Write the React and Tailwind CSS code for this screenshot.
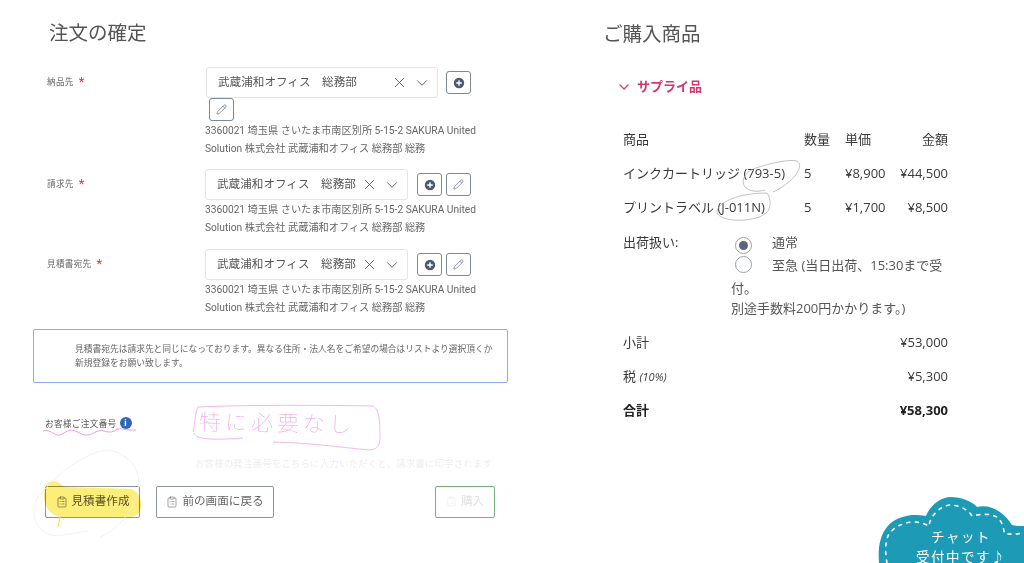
import { X, ChevronDown, Pencil, ClipboardList } from 'lucide-react'

const ADDRESS_1 = '3360021 埼玉県 さいたま市南区別所 5-15-2 SAKURA United'
const ADDRESS_2 = 'Solution 株式会社 武蔵浦和オフィス 総務部 総務'
const LEFT_FONT = 'font-["Roboto","Noto_Sans_CJK_JP",sans-serif]'
const RIGHT_FONT = 'font-["Open_Sans","Noto_Sans_CJK_JP",sans-serif]'

function CirclePlus() {
  return (
    <svg width="12" height="12" viewBox="0 0 12 12">
      <circle cx="6" cy="6" r="5.2" fill="#4b5a72" />
      <path d="M6 3.2v5.6M3.2 6h5.6" stroke="#fff" strokeWidth="1.4" />
    </svg>
  )
}

function IconButton({ children }) {
  return (
    <button className="w-[25px] h-[23px] flex items-center justify-center bg-white border border-[#7d8796] rounded-[3px] text-[#59647a]">
      {children}
    </button>
  )
}

function AddressRow({ label, selectWidth, rowClass, wrapped }) {
  return (
    <div className={`flex ${rowClass}`}>
      <div className="w-[158px] flex items-start pt-[8px] text-[8.6px] leading-[14px] tracking-[0.3px] text-[#666]">
        <span>{label}</span>
        <span className="text-[#e5312f] text-[13px] leading-[13px] ml-[5px]">*</span>
      </div>
      <div className="w-[282px]">
        <div className={`flex flex-wrap w-[272px] ${wrapped ? 'gap-x-[8px] pl-[1px]' : 'gap-x-[9px]'}`}>
          <div className={`${selectWidth} h-[31px] flex items-center pl-[11px] pr-[6px] bg-white border border-[#e2e4e8] rounded-[3px] text-[11.6px] text-[#555]`}>
            <span className="flex-1 whitespace-pre">武蔵浦和オフィス　総務部</span>
            <X size={17} strokeWidth={1.2} className="text-[#555] mr-[5px] shrink-0" />
            <ChevronDown size={18} strokeWidth={1.2} className="text-[#555] shrink-0" />
          </div>
          <div className={`flex items-center ${wrapped ? '' : 'gap-[4px]'}`}>
            <IconButton><CirclePlus /></IconButton>
            {!wrapped && <IconButton><Pencil size={11} strokeWidth={1.4} /></IconButton>}
          </div>
          {wrapped && (
            <div className="w-full pl-[3px]">
              <IconButton><Pencil size={11} strokeWidth={1.4} /></IconButton>
            </div>
          )}
        </div>
        <p className="mt-[1px] text-[10.2px] leading-[17.6px] text-[#666] whitespace-nowrap">
          {ADDRESS_1}<br />{ADDRESS_2}
        </p>
      </div>
    </div>
  )
}

function ActionButton({ className, children }) {
  return (
    <button className={`h-[32px] flex items-center justify-center gap-[4px] border rounded-[2px] text-[11.6px] ${className}`}>
      {children}
    </button>
  )
}

function ItemRow({ name, qty, price, total }) {
  return (
    <div className="grid grid-cols-[181px_41px_1fr_auto] h-[34px] items-center text-[13px] text-[#3a3a3a]">
      <span>{name}</span>
      <span>{qty}</span>
      <span>{price}</span>
      <span className="text-right">{total}</span>
    </div>
  )
}

function Radio({ checked }) {
  return (
    <span className="inline-flex align-[-3px] w-[17px] h-[17px] ml-[4px] mr-[20px] items-center justify-center rounded-full border border-[#9aa0aa] bg-white">
      {checked && <span className="w-[9px] h-[9px] rounded-full bg-[#5a6580]" />}
    </span>
  )
}

function SummaryRow({ label, value, bold }) {
  return (
    <div className={`flex justify-between items-center h-[34px] text-[13px] ${bold ? 'font-bold text-[#222]' : 'text-[#3a3a3a]'}`}>
      {label}
      <span>{value}</span>
    </div>
  )
}

// 手書きの書き込みとチャットバナーはページの上に重ねる
function Annotations() {
  return (
    <svg className="absolute inset-0 pointer-events-none" width="1024" height="563" viewBox="0 0 1024 563" fill="none">
      <path
        d="M44 497C44 487 47 481 53 481C58 481 61 485 66 487C85 488 110 488 130 489C138 491 142 498 141 507C140 514 136 517 128 517L60 517C51 515 44 507 44 497Z"
        fill="#fdee7a"
        className="mix-blend-multiply"
      />
      <path d="M60 517L58 527" stroke="#f8e05a" strokeWidth="1.2" />
      <path
        d="M88 531C78 532 62 537 50 535C34 528 31 512 36 500C50 480 85 450 110 450C138 458 142 478 137 495C130 515 115 532 100 537"
        stroke="#eceeef"
        strokeWidth="0.8"
      />
      <path
        d="M43 431C48 429 52 433 57 435C62 436 66 430 72 430C78 431 82 436 88 435C94 434 98 429 104 431C110 433 114 432 117 429C122 428 130 431 136 430"
        stroke="#ee8fe6"
        strokeWidth="0.9"
      />
      <path
        d="M193 432C195 424 195 412 198 407C240 405 320 405 372 406C379 407 380 420 380 438C380 447 376 450 368 450C340 447 310 443 273 442M194 433C195 438 205 441 243 438"
        stroke="#f6b6f2"
        strokeWidth="1"
      />
      <path
        d="M765 190C758 192 750 192 745 187C740 180 746 171 756 168C770 163 790 159 797 161C803 164 798 174 790 181C784 186 778 190 773 192"
        stroke="#a8a8a8"
        strokeWidth="0.7"
      />
      <path
        d="M767 193C755 193 740 195 731 199C722 203 716 208 717 213C720 219 733 221 745 220C755 219 766 216 769 209C771 203 770 197 767 193Z"
        stroke="#a8a8a8"
        strokeWidth="0.7"
      />
      <path
        d="M879 563C878 550 879 537 887 527C893 519 903 516 912 515C918 515 922 515 926 516C930 506 940 497 951 497C960 497 972 501 977 507C990 504 1003 511 1012 525C1016 526 1020 526 1024 526L1024 563Z"
        fill="#1d9bb6"
      />
      <path
        d="M887 563C885 553 885 541 889 534C895 526 905 522 914 522C920 522 925 524 929 526C930 516 940 506 950 505C958 505 968 509 972 516C980 514 992 513 998 518C1002 522 1004 528 1004 533C1010 535 1016 534 1024 533"
        stroke="#fff"
        strokeWidth="1.6"
        strokeLinecap="round"
        strokeDasharray="3 5.5"
      />
    </svg>
  )
}

export default function App() {
  return (
    <div className="relative w-[1024px] h-[563px] overflow-hidden bg-white flex blur-[0.35px]">
      <div className={`w-[540px] shrink-0 pl-[33px] pt-[21px] ${LEFT_FONT}`}>
        <h1 className="ml-[16px] text-[19.5px] leading-[26px] text-[#555]">注文の確定</h1>
        <div className="ml-[14px] mt-[20px] w-[440px]">
          <AddressRow label="納品先" selectWidth="w-[232px]" wrapped />
          <AddressRow label="請求先" selectWidth="w-[203px]" rowClass="mt-[12px]" />
          <AddressRow label="見積書宛先" selectWidth="w-[203px]" rowClass="mt-[13px]" />
        </div>
        <div className="mt-[12px] w-[475px] h-[54px] pl-[41px] pr-[10px] flex items-center border border-[#86b2e6] rounded-[2px] text-[8.74px] leading-[14px] text-[#666]">
          <p>見積書宛先は請求先と同じになっております。異なる住所・法人名をご希望の場合はリストより選択頂くか新規登録をお願い致します。</p>
        </div>
        <div className="ml-[12px] mt-[34px] flex items-center h-[16px] text-[8.6px] tracking-[0.35px] text-[#555]">
          <span>お客様ご注文番号</span>
          <span className="ml-[3px] -mt-[3px] w-[12px] h-[12px] rounded-full bg-[#2f66b5] text-white text-[9px] leading-[12px] font-bold text-center">i</span>
        </div>
        <div className="relative h-[0px]">
          <span className="absolute left-[166px] -top-[21px] text-[22px] leading-[24px] tracking-[4px] text-[#f3a6ef] rotate-1 font-thin whitespace-nowrap">特に必要なし</span>
        </div>
        <p className="ml-[162px] mt-[24px] text-[9.6px] leading-[14px] text-[#eeeeee] whitespace-nowrap">お客様の発注番号をこちらに入力いただくと、請求書に印字されます</p>
        <div className="mt-[15px] ml-[12px] w-[450px] flex">
          <ActionButton className="w-[95px] border-[#8f939a] text-[#555]">
            <ClipboardList size={12} strokeWidth={1.2} />見積書作成
          </ActionButton>
          <ActionButton className="ml-[16px] w-[118px] bg-white border-[#8f939a] text-[#666]">
            <ClipboardList size={12} strokeWidth={1.2} />前の画面に戻る
          </ActionButton>
          <ActionButton className="ml-auto w-[60px] bg-white border-[#78b07a] text-[#e2e2e2]">
            <ClipboardList size={11} strokeWidth={1} />購入
          </ActionButton>
        </div>
      </div>

      <div className={`w-[345px] ml-[63px] pt-[21px] ${RIGHT_FONT}`}>
        <h2 className="text-[19.5px] leading-[26px] text-[#555]">ご購入商品</h2>
        <div className="mt-[28px] ml-[13px] h-[24px] flex items-center gap-[5px] text-[13px] font-bold text-[#d8336f]">
          <ChevronDown size={16} strokeWidth={1.8} />
          <span>サプライ品</span>
        </div>
        <div className="mt-[24px] ml-[20px]">
          <ItemRow name="商品" qty="数量" price="単価" total="金額" />
          <ItemRow name="インクカートリッジ (793-5)" qty="5" price="¥8,900" total="¥44,500" />
          <ItemRow name="プリントラベル (J-011N)" qty="5" price="¥1,700" total="¥8,500" />
          <div className="flex mt-[6px] text-[13px] text-[#555]">
            <span className="w-[108px] leading-[23px] text-[#3a3a3a]">出荷扱い:</span>
            <div className="w-[216px] leading-[23px]">
              <div><Radio checked />通常</div>
              <div><Radio />至急 (当日出荷、15:30まで受付。</div>
              <div className="leading-[17px]">別途手数料200円かかります。)</div>
            </div>
          </div>
          <div className="mt-[9px]">
            <SummaryRow label={<span>小計</span>} value="¥53,000" />
            <SummaryRow label={<span>税 <i className="text-[11px]">(10%)</i></span>} value="¥5,300" />
            <SummaryRow label={<span>合計</span>} value="¥58,300" bold />
          </div>
        </div>
      </div>

      <Annotations />
      <div className="absolute left-[898px] top-[526px] w-[126px] text-center text-white text-[13.5px] leading-[20px] tracking-[1.5px] font-['Noto_Sans_CJK_JP',sans-serif]">
        <div>チャット</div>
        <div className="whitespace-nowrap">受付中です♪</div>
      </div>
    </div>
  )
}
